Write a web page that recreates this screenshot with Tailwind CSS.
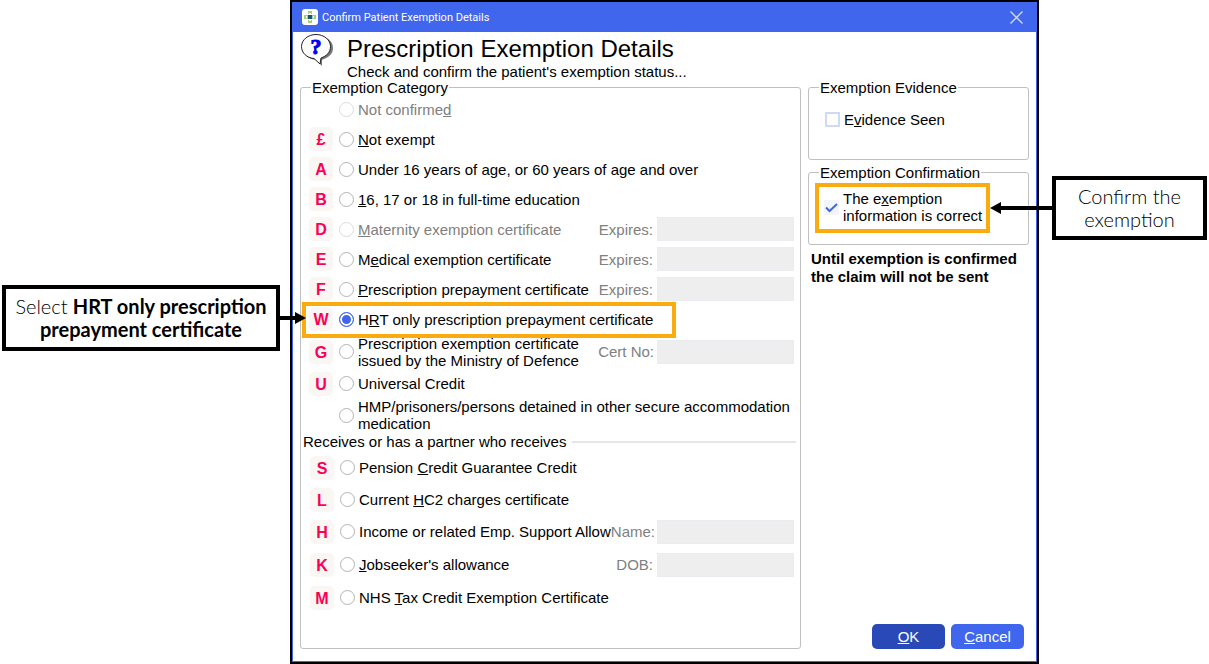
<!DOCTYPE html>
<html lang="en">
<head>
    <meta charset="UTF-8">
    <meta name="viewport" content="width=device-width, initial-scale=1.0">
    <title>Confirm Patient Exemption Details</title>
    <script src="https://cdn.jsdelivr.net/npm/@tailwindcss/browser@4"></script>
</head>
<body class="bg-white text-black font-['Liberation_Sans',Arial,sans-serif] text-[15px] leading-[17px]">
    <div class="flex min-h-screen">

        <!-- Left callout -->
        <aside class="w-[290px] shrink-0 pl-[2px] pr-[10px] pt-[285px]">
            <div class="relative border-4 border-black py-[6px] text-center font-['Lato',sans-serif] text-[20px] leading-[23px]">
                <p><span class="font-light">Select</span> <b>HRT only prescription</b><br><b>prepayment certificate</b></p>
                <svg class="absolute left-full top-[23px] ml-1 z-10" width="26" height="12" viewBox="0 0 26 12"><path d="M0 4h15V0l11 6-11 6V8H0z"/></svg>
            </div>
        </aside>

        <!-- Dialog window -->
        <main class="flex flex-1 border-2 border-black">
            <div class="flex flex-1 flex-col border border-t-0 border-[#3f66ec]">
                <header class="flex h-[30px] items-center bg-[#3f66ec] pl-[9px] pr-3 text-white">
                    <svg width="16" height="16" viewBox="0 0 16 16">
                        <rect width="16" height="16" rx="3" fill="#fff"/>
                        <path d="M6 2h4v3H6zM6 11h4v3H6zM2 6h3v4H2zM11 6h3v4h-3z" fill="#a5cf7c"/>
                        <path d="M7 4h2v1H7zM7 11h2v1H7zM4 7h1v2H4zM11 7h1v2h-1z" fill="#fff"/>
                        <path d="M5 6h6v4H5z" fill="#9cc9bd"/>
                        <path d="M6 6h4v4H6z" fill="#17586b"/>
                    </svg>
                    <span class="ml-1 flex-1 font-['Roboto',sans-serif] text-[11px]">Confirm Patient Exemption Details</span>
                    <button type="button" aria-label="Close">
                        <svg width="15" height="13" viewBox="0 0 15 13" fill="none" stroke="#d3ddfb" stroke-width="1.3"><path d="M1.500.5l12 12M13.500.5l-12 12"/></svg>
                    </button>
                </header>

                <div class="flex h-12 pl-2">
                    <svg class="mt-[2px] shrink-0" width="33" height="32" viewBox="0 0 33 32">
                        <path d="M17 2C26 2 32 7 32 14c0 6-4 9-9 11l-2 1v6l-6-6C7 25 3 21 3 14z" fill="#777"/>
                        <path d="M15 .5C23 .5 29.500 6 29.500 12.500c0 6-4 9.500-9.500 11.500l-1 6-6-5.500C6 24 .5 19 .5 12.500.5 6 7 .5 15 .5z" fill="#fff" stroke="#222"/>
                        <text x="15" y="20" text-anchor="middle" fill="#0000f0" stroke="#0000f0" stroke-width="1" class="font-['Liberation_Serif',serif] text-[22px] font-bold">?</text>
                    </svg>
                    <div class="ml-[13px] pt-[3px]">
                        <h1 class="text-[24px] leading-[28px]">Prescription Exemption Details</h1>
                        <p>Check and confirm the patient's exemption status...</p>
                    </div>
                </div>

                <div class="flex flex-1 gap-[7px] px-[7px] pb-3">
                    <!-- Exemption category -->
                    <fieldset class="min-w-0 flex-1 rounded-[3px] border border-[#c0c0c0]">
                        <legend class="ml-[10px] px-px leading-[15px]">Exemption Category</legend>

                        <div class="flex h-[29px] items-center pl-[38px]">
                            <input type="radio" name="category" id="unconfirmed" disabled class="size-[15px] shrink-0 appearance-none rounded-full border border-[#dcdcdc]">
                            <label for="unconfirmed" class="ml-1 text-[#808080]">Not confirme<u>d</u></label>
                        </div>
                        <div class="flex h-[30px] items-center pl-2">
                            <span class="size-6 rounded-[5px] bg-[#faf6f3] text-center text-base leading-[26px] font-bold text-[#fb0054]">£</span>
                            <input type="radio" name="category" id="notexempt" class="ml-[6px] size-[15px] shrink-0 appearance-none rounded-full border border-[#b4b4b4]">
                            <label for="notexempt" class="ml-1"><u>N</u>ot exempt</label>
                        </div>
                        <div class="flex h-[30px] items-center pl-2">
                            <span class="size-6 rounded-[5px] bg-[#faf6f3] text-center text-base leading-[26px] font-bold text-[#fb0054]">A</span>
                            <input type="radio" name="category" id="age" class="ml-[6px] size-[15px] shrink-0 appearance-none rounded-full border border-[#b4b4b4]">
                            <label for="age" class="ml-1">Under 16 years of age, or 60 years of age and over</label>
                        </div>
                        <div class="flex h-[30px] items-center pl-2">
                            <span class="size-6 rounded-[5px] bg-[#faf6f3] text-center text-base leading-[26px] font-bold text-[#fb0054]">B</span>
                            <input type="radio" name="category" id="education" class="ml-[6px] size-[15px] shrink-0 appearance-none rounded-full border border-[#b4b4b4]">
                            <label for="education" class="ml-1"><u>1</u>6, 17 or 18 in full-time education</label>
                        </div>
                        <div class="flex h-[30px] items-center pl-2 pr-[6px]">
                            <span class="size-6 rounded-[5px] bg-[#faf6f3] text-center text-base leading-[26px] font-bold text-[#fb0054]">D</span>
                            <input type="radio" name="category" id="maternity" disabled class="ml-[6px] size-[15px] shrink-0 appearance-none rounded-full border border-[#dcdcdc]">
                            <label for="maternity" class="ml-1 text-[#808080]"><u>M</u>aternity exemption certificate</label>
                            <label for="maternity-expires" class="ml-auto mr-1 text-[#808080]">Expires:</label>
                            <input type="text" id="maternity-expires" disabled class="h-6 w-[137px] border border-[#e9edf2] bg-[#eeeeee]">
                        </div>
                        <div class="flex h-[30px] items-center pl-2 pr-[6px]">
                            <span class="size-6 rounded-[5px] bg-[#faf6f3] text-center text-base leading-[26px] font-bold text-[#fb0054]">E</span>
                            <input type="radio" name="category" id="medical" class="ml-[6px] size-[15px] shrink-0 appearance-none rounded-full border border-[#b4b4b4]">
                            <label for="medical" class="ml-1">M<u>e</u>dical exemption certificate</label>
                            <label for="medical-expires" class="ml-auto mr-1 text-[#808080]">Expires:</label>
                            <input type="text" id="medical-expires" disabled class="h-6 w-[137px] border border-[#e9edf2] bg-[#eeeeee]">
                        </div>
                        <div class="flex h-[30px] items-center pl-2 pr-[6px]">
                            <span class="size-6 rounded-[5px] bg-[#faf6f3] text-center text-base leading-[26px] font-bold text-[#fb0054]">F</span>
                            <input type="radio" name="category" id="prepayment" class="ml-[6px] size-[15px] shrink-0 appearance-none rounded-full border border-[#b4b4b4]">
                            <label for="prepayment" class="ml-1"><u>P</u>rescription prepayment certificate</label>
                            <label for="prepayment-expires" class="ml-auto mr-1 text-[#808080]">Expires:</label>
                            <input type="text" id="prepayment-expires" disabled class="h-6 w-[137px] border border-[#e9edf2] bg-[#eeeeee]">
                        </div>
                        <div class="relative flex h-[30px] items-center pl-2">
                            <div class="absolute -top-[2px] -bottom-1 left-px w-[374px] border-4 border-[#f9ab10]"></div>
                            <span class="size-6 rounded-[5px] bg-[#faf6f3] text-center text-base leading-[26px] font-bold text-[#fb0054]">W</span>
                            <input type="radio" name="category" id="hrt" checked class="ml-[6px] size-[15px] shrink-0 appearance-none rounded-full border border-[#3f66ec] bg-[#3f66ec] shadow-[inset_0_0_0_2px_white]">
                            <label for="hrt" class="ml-1">H<u>R</u>T only prescription prepayment certificate</label>
                        </div>
                        <div class="flex h-[35px] items-center pl-2 pr-[6px]">
                            <span class="size-6 rounded-[5px] bg-[#faf6f3] text-center text-base leading-[26px] font-bold text-[#fb0054]">G</span>
                            <input type="radio" name="category" id="defence" class="ml-[6px] size-[15px] shrink-0 appearance-none rounded-full border border-[#b4b4b4]">
                            <label for="defence" class="ml-1">Prescription exemption certificate<br>issued by the Ministry of Defence</label>
                            <label for="cert-no" class="ml-auto mr-[3px] text-[#808080]">Cert No:</label>
                            <input type="text" id="cert-no" disabled class="h-6 w-[137px] border border-[#e9edf2] bg-[#eeeeee]">
                        </div>
                        <div class="flex h-[29px] items-center pl-2">
                            <span class="size-6 rounded-[5px] bg-[#faf6f3] text-center text-base leading-[26px] font-bold text-[#fb0054]">U</span>
                            <input type="radio" name="category" id="universal" class="ml-[6px] size-[15px] shrink-0 appearance-none rounded-full border border-[#b4b4b4]">
                            <label for="universal" class="ml-1">Universal Credit</label>
                        </div>
                        <div class="flex h-[34px] items-center pl-[38px]">
                            <input type="radio" name="category" id="hmp" class="size-[15px] shrink-0 appearance-none rounded-full border border-[#b4b4b4]">
                            <label for="hmp" class="ml-1">HMP/prisoners/persons detained in other secure accommodation<br>medication</label>
                        </div>

                        <h2 class="flex items-center gap-[6px] pl-[2px] pr-1 leading-[19px] after:h-[2px] after:flex-1 after:bg-[#e6e6e6]">Receives or has a partner who receives</h2>

                        <div class="flex h-[33px] items-center pl-[9px]">
                            <span class="size-6 rounded-[5px] bg-[#faf6f3] text-center text-base leading-[26px] font-bold text-[#fb0054]">S</span>
                            <input type="radio" name="category" id="pension" class="ml-[6px] size-[15px] shrink-0 appearance-none rounded-full border border-[#b4b4b4]">
                            <label for="pension" class="ml-1">Pension <u>C</u>redit Guarantee Credit</label>
                        </div>
                        <div class="flex h-[31px] items-center pl-[9px]">
                            <span class="size-6 rounded-[5px] bg-[#faf6f3] text-center text-base leading-[26px] font-bold text-[#fb0054]">L</span>
                            <input type="radio" name="category" id="hc2" class="ml-[6px] size-[15px] shrink-0 appearance-none rounded-full border border-[#b4b4b4]">
                            <label for="hc2" class="ml-1">Current <u>H</u>C2 charges certificate</label>
                        </div>
                        <div class="flex h-[33px] items-center pl-[9px] pr-[6px]">
                            <span class="size-6 rounded-[5px] bg-[#faf6f3] text-center text-base leading-[26px] font-bold text-[#fb0054]">H</span>
                            <input type="radio" name="category" id="income" class="ml-[6px] size-[15px] shrink-0 appearance-none rounded-full border border-[#b4b4b4]">
                            <label for="income" class="ml-1 whitespace-nowrap">Income or related Emp. Support Allow</label>
                            <label for="name" class="ml-auto mr-[2px] text-[#808080]">Name:</label>
                            <input type="text" id="name" disabled class="h-6 w-[137px] shrink-0 border border-[#e9edf2] bg-[#eeeeee]">
                        </div>
                        <div class="flex h-[33px] items-center pl-[9px] pr-[6px]">
                            <span class="size-6 rounded-[5px] bg-[#faf6f3] text-center text-base leading-[26px] font-bold text-[#fb0054]">K</span>
                            <input type="radio" name="category" id="jobseeker" class="ml-[6px] size-[15px] shrink-0 appearance-none rounded-full border border-[#b4b4b4]">
                            <label for="jobseeker" class="ml-1"><u>J</u>obseeker's allowance</label>
                            <label for="dob" class="ml-auto mr-1 text-[#808080]">DOB:</label>
                            <input type="text" id="dob" disabled class="h-6 w-[137px] border border-[#e9edf2] bg-[#eeeeee]">
                        </div>
                        <div class="flex h-[33px] items-center pl-[9px]">
                            <span class="size-6 rounded-[5px] bg-[#faf6f3] text-center text-base leading-[26px] font-bold text-[#fb0054]">M</span>
                            <input type="radio" name="category" id="taxcredit" class="ml-[6px] size-[15px] shrink-0 appearance-none rounded-full border border-[#b4b4b4]">
                            <label for="taxcredit" class="ml-1">NHS <u>T</u>ax Credit Exemption Certificate</label>
                        </div>
                    </fieldset>

                    <!-- Evidence and confirmation -->
                    <div class="flex w-[221px] shrink-0 flex-col">
                        <fieldset class="h-20 rounded-[3px] border border-[#c0c0c0]">
                            <legend class="ml-[10px] px-px leading-[15px]">Exemption Evidence</legend>
                            <div class="flex items-center pl-4 pt-4">
                                <input type="checkbox" id="evidence" class="size-[15px] appearance-none border-2 border-[#cfd9f8]">
                                <label for="evidence" class="ml-1">E<u>v</u>idence Seen</label>
                            </div>
                        </fieldset>

                        <fieldset class="mt-[5px] h-20 rounded-[3px] border border-[#c0c0c0]">
                            <legend class="ml-[10px] px-px leading-[15px]">Exemption Confirmation</legend>
                            <div class="ml-[6px] mt-[3px] flex h-[50px] w-[175px] items-center border-4 border-[#f9ab10] pl-[5px] pb-[2px]">
                                <span class="relative size-[15px]">
                                    <input type="checkbox" id="correct" checked class="block size-[15px] appearance-none bg-[#f2f6fc]">
                                    <svg class="pointer-events-none absolute inset-0" width="15" height="15" viewBox="0 0 15 15" fill="none" stroke="#3f66ec" stroke-width="2"><path d="M2 7.500l3.500 3.500L13 4"/></svg>
                                </span>
                                <label for="correct" class="ml-1 whitespace-nowrap">The e<u>x</u>emption<br>information is correct</label>
                            </div>
                        </fieldset>

                        <p class="ml-[3px] mt-[5px] font-bold leading-[18px]">Until exemption is confirmed<br>the claim will not be sent</p>

                        <div class="mt-auto flex justify-end gap-[6px] pr-[5px]">
                            <button type="button" class="h-[25px] w-[73px] rounded-[5px] bg-[#2a49b8] text-white"><u>O</u>K</button>
                            <button type="button" class="h-[25px] w-[73px] rounded-[5px] bg-[#3f66ec] text-white"><u>C</u>ancel</button>
                        </div>
                    </div>
                </div>
            </div>
        </main>

        <!-- Right callout -->
        <aside class="w-[170px] shrink-0 pl-[13px] pr-[2px] pt-[176px]">
            <div class="relative border-4 border-black py-[5px] text-center font-['Lato',sans-serif] text-[20px] font-light leading-[23px]">
                <p>Confirm the<br>exemption</p>
                <svg class="absolute right-full top-[22px] mr-1 z-10" width="62" height="12" viewBox="0 0 62 12"><path d="M62 4H11V0L0 6l11 6V8h51z"/></svg>
            </div>
        </aside>
    </div>
</body>
</html>
